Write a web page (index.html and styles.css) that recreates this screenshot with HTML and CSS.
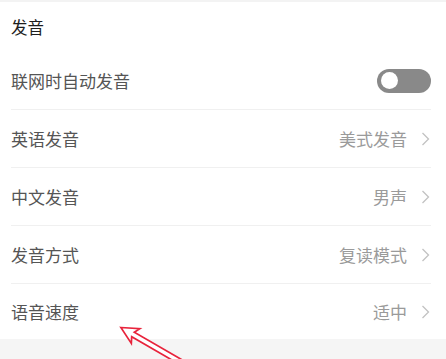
FILE: index.html
```html
<!DOCTYPE html>
<html lang="zh">
<head>
<meta charset="utf-8">
<link rel="stylesheet" href="styles.css">
</head>
<body>
<div class="topline"></div>
<div class="section">
  <div class="header">发音</div>
  <div class="row">
    <span class="label">联网时自动发音</span>
    <span class="toggle"><span class="knob"></span></span>
  </div>
  <div class="row">
    <span class="label">英语发音</span>
    <span class="value">美式发音<svg class="chev" viewBox="0 0 9 14" width="9" height="14"><path d="M1.5 1 L7.5 7 L1.5 13" fill="none" stroke="#c2c2c2" stroke-width="1.3"/></svg></span>
  </div>
  <div class="row">
    <span class="label">中文发音</span>
    <span class="value">男声<svg class="chev" viewBox="0 0 9 14" width="9" height="14"><path d="M1.5 1 L7.5 7 L1.5 13" fill="none" stroke="#c2c2c2" stroke-width="1.3"/></svg></span>
  </div>
  <div class="row">
    <span class="label">发音方式</span>
    <span class="value">复读模式<svg class="chev" viewBox="0 0 9 14" width="9" height="14"><path d="M1.5 1 L7.5 7 L1.5 13" fill="none" stroke="#c2c2c2" stroke-width="1.3"/></svg></span>
  </div>
  <div class="row last">
    <span class="label">语音速度</span>
    <span class="value">适中<svg class="chev" viewBox="0 0 9 14" width="9" height="14"><path d="M1.5 1 L7.5 7 L1.5 13" fill="none" stroke="#c2c2c2" stroke-width="1.3"/></svg></span>
  </div>
</div>
<div class="gap"></div>
<div class="arrow-wrap">
  <svg class="arrow" width="66" height="20" viewBox="0 -10 66 20">
    <polygon points="1,0 18,-8.5 15,-2.6 70,-2.6 70,2.6 15,2.6 18,8.5" fill="#fff" stroke="#e8243c" stroke-width="1.7" stroke-linejoin="miter"/>
  </svg>
</div>
</body>
</html>
```
FILE: styles.css
```css
html, body {
  margin: 0;
  padding: 0;
  background: #fff;
  width: 446px;
  height: 359px;
  overflow: hidden;
  font-family: "Noto Sans CJK SC", "Noto Sans", sans-serif;
  position: relative;
}
.topline {
  height: 2px;
  background: #f3f3f3;
}
.section {
  display: flex;
  flex-direction: column;
}
.header {
  height: 50px;
  display: flex;
  align-items: center;
  padding-left: 11px;
  font-size: 16.5px;
  color: #1e1e1e;
}
.row {
  height: 57px;
  margin: 0 15px 0 11px;
  border-bottom: 1px solid #f0f0f0;
  display: flex;
  align-items: center;
  justify-content: space-between;
}
.row.last {
  height: 55px;
  border-bottom: none;
}
.label {
  font-size: 17px;
  color: #555;
}
.value {
  font-size: 17px;
  color: #9a9a9a;
  display: flex;
  align-items: center;
  gap: 14px;
}
.chev {
  display: block;
  margin-right: 1px;
}
.toggle {
  width: 54px;
  height: 24px;
  border-radius: 12px;
  background: #898989;
  display: flex;
  align-items: center;
  padding-left: 4px;
  box-sizing: border-box;
}
.knob {
  width: 17px;
  height: 17px;
  border-radius: 50%;
  background: #fff;
}
.gap {
  height: 20px;
  background: #f5f5f5;
}
.arrow-wrap {
  position: absolute;
  left: 0;
  top: 0;
  width: 446px;
  height: 359px;
  overflow: hidden;
  pointer-events: none;
}
.arrow {
  position: absolute;
  left: 120px;
  top: 317px;
  transform-origin: 0 10px;
  transform: rotate(30deg);
  overflow: visible;
}
```
